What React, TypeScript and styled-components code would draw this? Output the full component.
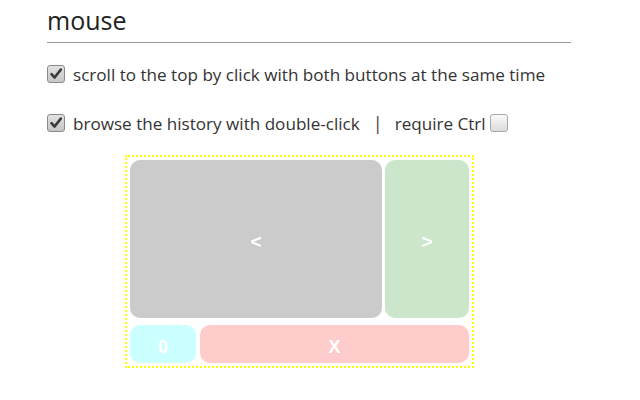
import styled, { createGlobalStyle } from "styled-components";

const GlobalStyle = createGlobalStyle`
    html, body {
        margin: 0;
        padding: 0;
        background: #fff;
    }
    body {
        font-family: "Open Sans", "Liberation Sans", sans-serif;
        color: #333;
    }
`

interface CheckProps {
    $checked?: boolean;
}

interface CellProps {
    $color: string;
    $size?: number;
}

const Check = ({checked}: { checked?: boolean }) => (
    <CheckBox $checked={checked}>
        {checked && (
            <svg width="14" height="14" viewBox="0 0 14 14">
                <path d="M2.5 7.2 L5.6 10.5 L11.8 2.6" fill="none" stroke="#3a3a3a" strokeWidth="2.6"
                      strokeLinecap="round" strokeLinejoin="round"/>
            </svg>
        )}
    </CheckBox>
)

export default function App() {
    return (
        <>
            <GlobalStyle/>
            <Page>
                <Heading>mouse</Heading>
                <OptionRow $top={21}>
                    <Check checked/>
                    <Label>scroll to the top by click with both buttons at the same time</Label>
                </OptionRow>
                <OptionRow $top={29}>
                    <Check checked/>
                    <Label>browse the history with double-click</Label>
                    <Divider>|</Divider>
                    <Label>require Ctrl</Label>
                    <Check/>
                </OptionRow>
                <Pad>
                    <PadRow $columns="252px 84px" $gap={3}>
                        <Cell $color="#cbcbcb" $size={19}>&lt;</Cell>
                        <Cell $color="#cce6cb" $size={19}>&gt;</Cell>
                    </PadRow>
                    <PadRow $columns="66px 269px" $gap={4}>
                        <Cell $color="#ccffff" $size={18}>0</Cell>
                        <Cell $color="#ffcccc" $size={18}>X</Cell>
                    </PadRow>
                </Pad>
            </Page>
        </>
    )
}

const Page = styled.div`
    padding: 4px 0 0 47px;
    width: 524px;
`

const Heading = styled.h2`
    margin: 0;
    font-size: 25px;
    font-weight: 400;
    line-height: 32px;
    color: #222;
    padding-bottom: 6px;
    border-bottom: 1px solid #999;
`

const OptionRow = styled.div<{ $top: number }>`
    display: flex;
    align-items: center;
    height: 20px;
    margin-top: ${({$top}) => $top}px;
`

const CheckBox = styled.span<CheckProps>`
    display: inline-flex;
    align-items: center;
    justify-content: center;
    width: 16px;
    height: 16px;
    flex: none;
    border: 1px solid ${({$checked}) => $checked ? "#8a8a8a" : "#a8a8a8"};
    border-radius: 3px;
    background: ${({$checked}) => $checked
            ? "linear-gradient(#e2e2e2, #c6c6c6)"
            : "linear-gradient(#fafafa, #dcdcdc)"};
    margin-right: 8px;

    &:last-child {
        margin: 0 0 0 4px;
    }
`

const Label = styled.span`
    font-size: 17.1px;
    white-space: nowrap;
`

const Divider = styled.span`
    font-size: 18px;
    color: #444;
    margin: 0 12px 0 13px;
`

const Pad = styled.div`
    box-sizing: border-box;
    width: 349px;
    height: 213px;
    margin: 22px 0 0 78px;
    padding: 3px;
    border: 2px dotted #ffff00;
    display: flex;
    flex-direction: column;
    gap: 7px;
`

const PadRow = styled.div<{ $columns: string; $gap: number }>`
    display: grid;
    grid-template-columns: ${({$columns}) => $columns};
    gap: ${({$gap}) => $gap}px;
    flex: 1;

    &:last-child {
        flex: none;
        height: 38px;
    }
`

const Cell = styled.div<CellProps>`
    display: flex;
    align-items: center;
    justify-content: center;
    padding-top: 6px;
    background: ${({$color}) => $color};
    border-radius: 10px;
    color: #fff;
    font-family: "Liberation Sans", Arial, sans-serif;
    font-weight: 700;
    font-size: ${({$size}) => $size ?? 17}px;
`
